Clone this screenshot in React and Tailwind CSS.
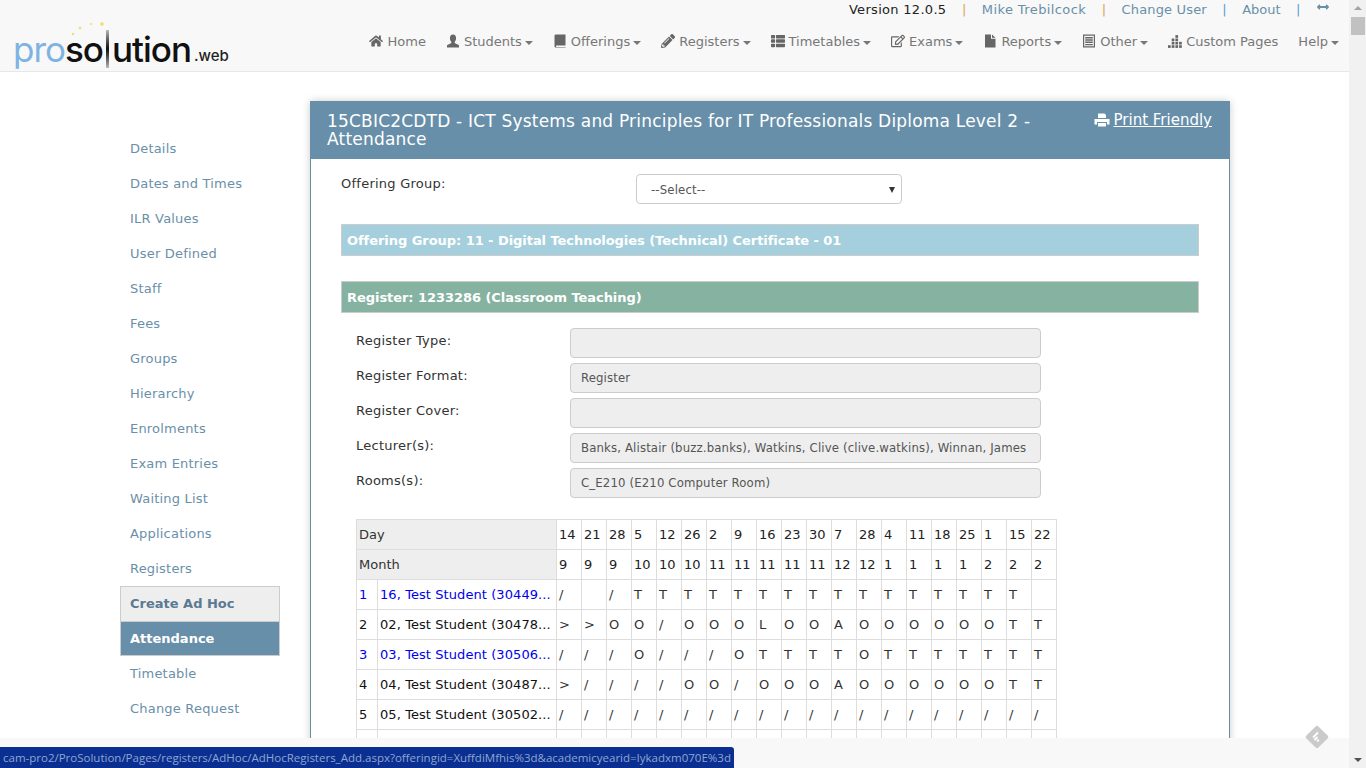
import React from 'react';
import { FaHome, FaPencilAlt, FaThList, FaRegEdit, FaArrowsAltH } from 'react-icons/fa';

function UserIcon({ className }) {
  return (
    <svg viewBox="0 0 14 14" className={className} fill="currentColor">
      <path d="M7 .5c2 0 3.100 1.500 3.100 3.600 0 1.500-.6 3-1.400 3.800v1.200l4.300 2.200v2.200H1v-2.200l4.300-2.200V7.900C4.500 7.100 3.900 5.600 3.900 4.100 3.900 2 5 .5 7 .5z" />
    </svg>
  );
}

function BookIcon({ className }) {
  return (
    <svg viewBox="0 0 14 14" className={className} fill="currentColor">
      <path d="M3 .5h9.500v11H3.700c-.5 0-.8.300-.8.700s.3.700.8.700h8.800v.6H3c-1 0-1.500-.5-1.500-1.500V2C1.500 1 2 .5 3 .5z" />
    </svg>
  );
}

function FileIcon({ className }) {
  return (
    <svg viewBox="0 0 14 14" className={className} fill="currentColor">
      <path d="M2 .5h6v4.200h4.500v8.800H2zM9 .5l3.500 3.300H9z" />
    </svg>
  );
}

function ListAltIcon({ className }) {
  return (
    <svg viewBox="0 0 14 14" className={className} fill="currentColor">
      <path fillRule="evenodd" d="M1 .5h12v13H1zM2.200 1.700v10.600h9.600V1.700z" />
      <path d="M3.200 3h7.600v1.400H3.200zM3.200 5.300h7.600v1.400H3.200zM3.200 7.600h7.600V9H3.200zM3.200 9.900h7.600v1.400H3.200z" />
    </svg>
  );
}

function DotsIcon({ className }) {
  // stepped block of squares used by "Custom Pages"
  const cells = [[0, 10], [3.3, 4], [3.3, 7], [3.3, 10], [6.6, 1], [6.6, 4], [6.6, 7], [6.6, 10], [9.9, 7], [9.9, 10]];
  return (
    <svg viewBox="0 0 12.5 12.5" className={className} fill="currentColor">
      {cells.map(([x, y]) => <rect key={`${x}-${y}`} x={x} y={y} width="2.4" height="2.4" />)}
    </svg>
  );
}

function PrintIcon({ className }) {
  return (
    <svg viewBox="0 0 16 16" className={className} fill="currentColor">
      <path d="M4 1.500h6.500L12 3v3H4zM.5 7h15v5.500H13V10H3v2.500H.5zM4 11h8v3.500H4z" />
    </svg>
  );
}

const NAV = [
  { label: 'Home', icon: FaHome },
  { label: 'Students', icon: UserIcon, caret: true },
  { label: 'Offerings', icon: BookIcon, caret: true },
  { label: 'Registers', icon: FaPencilAlt, caret: true },
  { label: 'Timetables', icon: FaThList, caret: true },
  { label: 'Exams', icon: FaRegEdit, caret: true },
  { label: 'Reports', icon: FileIcon, caret: true },
  { label: 'Other', icon: ListAltIcon, caret: true },
  { label: 'Custom Pages', icon: DotsIcon },
  { label: 'Help', caret: true },
];

const SIDE = ['Details', 'Dates and Times', 'ILR Values', 'User Defined', 'Staff', 'Fees', 'Groups', 'Hierarchy', 'Enrolments', 'Exam Entries', 'Waiting List', 'Applications', 'Registers'];

const FIELDS = [
  ['Register Type:', ''],
  ['Register Format:', 'Register'],
  ['Register Cover:', ''],
  ['Lecturer(s):', 'Banks, Alistair (buzz.banks), Watkins, Clive (clive.watkins), Winnan, James'],
  ['Rooms(s):', 'C_E210 (E210 Computer Room)'],
];

const DAYS = [14, 21, 28, 5, 12, 26, 2, 9, 16, 23, 30, 7, 28, 4, 11, 18, 25, 1, 15, 22];
const MONTHS = [9, 9, 9, 10, 10, 10, 11, 11, 11, 11, 11, 12, 12, 1, 1, 1, 1, 2, 2, 2];

const ROWS = [
  { n: 1, name: '16, Test Student (30449...', link: true, marks: ['/', '', '/', 'T', 'T', 'T', 'T', 'T', 'T', 'T', 'T', 'T', 'T', 'T', 'T', 'T', 'T', 'T', 'T', ''] },
  { n: 2, name: '02, Test Student (30478...', marks: ['>', '>', 'O', 'O', '/', 'O', 'O', 'O', 'L', 'O', 'O', 'A', 'O', 'O', 'O', 'O', 'O', 'O', 'T', 'T'] },
  { n: 3, name: '03, Test Student (30506...', link: true, marks: ['/', '/', '/', 'O', '/', '/', '/', 'O', 'T', 'T', 'T', 'T', 'O', 'T', 'T', 'T', 'T', 'T', 'T', 'T'] },
  { n: 4, name: '04, Test Student (30487...', marks: ['>', '/', '/', '/', '/', 'O', 'O', '/', 'O', 'O', 'O', 'A', 'O', 'O', 'O', 'O', 'O', 'O', 'T', 'T'] },
  { n: 5, name: '05, Test Student (30502...', marks: Array(20).fill('/') },
  { n: '', name: '', marks: Array(20).fill('') },
];

function Sep({ color }) {
  return <span className={`mx-[15.5px] ${color}`}>|</span>;
}

export default function App() {
  return (
    <div className="relative flex h-screen w-full overflow-hidden bg-white text-[13px] text-[#333] font-['DejaVu_Sans',Verdana,sans-serif]">
      <div className="min-w-0 flex-1 overflow-hidden">
        {/* navbar */}
        <div className="h-[72px] border-b border-[#e7e7e7] bg-[#f8f8f8]">
          <div className="flex h-[19px] items-center justify-end pr-[19px] leading-[19px]">
            <span className="tracking-[0.3px] text-[#222]">Version 12.0.5</span>
            <Sep color="text-[#d8a45a]" />
            <span className="tracking-[0.4px] text-[#6a8fa9]">Mike Trebilcock</span>
            <Sep color="text-[#d8a45a]" />
            <span className="tracking-[0.15px] text-[#6a8fa9]">Change User</span>
            <Sep color="text-[#5b9bd5]" />
            <span className="text-[#6a8fa9]">About</span>
            <Sep color="text-[#5b9bd5]" />
            <FaArrowsAltH className="mb-[5px] h-[12px] w-[14px] text-[#6a8fa9]" />
          </div>
          <div className="flex h-[52px] items-start">
            <div className="relative ml-[13px] flex h-[50px] items-end text-[35px] leading-[40px] font-['Inter',sans-serif]">
              <svg viewBox="0 0 50 16" className="absolute left-[54px] top-[2px] h-[16px] w-[50px]" fill="#f2dc6a">
                <circle cx="6" cy="13" r="1.2" />
                <circle cx="13" cy="7" r="1.3" />
                <circle cx="24" cy="3" r="1" />
                <circle cx="35" cy="3" r="1.8" />
              </svg>
              <span className="font-normal tracking-[-1px] text-[#7fb3e2]">pro</span>
              <span className="font-medium tracking-[-1px] text-[#111]">so</span>
              <span className="mx-[3px] mb-[1px] h-[38px] w-[3px] self-end bg-gradient-to-b from-[#bbb] via-[#111] to-[#bbb]" />
              <span className="font-medium tracking-[-1px] text-[#111]">ution</span>
              <span className="mb-[3px] ml-[3px] text-[15px] leading-[20px] font-medium text-[#222]">.web</span>
            </div>
            <div className="ml-auto flex h-[46px] items-center text-[#777]">
              {NAV.map((item) => (
                <div key={item.label} className="flex items-center px-[10px]">
                  {item.icon && <item.icon className="mr-[4px] mb-[3px] h-[14px] w-[14px] text-[#666]" />}
                  <span>{item.label}</span>
                  {item.caret && <span className="ml-[3px] mt-[1px] h-0 w-0 border-x-[4px] border-t-[4px] border-x-transparent border-t-[#777]" />}
                </div>
              ))}
            </div>
          </div>
        </div>

        <div className="flex items-start pl-[120px] pt-[29px]">
          {/* side menu */}
          <div className="w-[160px] shrink-0 pt-[30px] text-[#6a8fa9]">
            {SIDE.map((s) => (
              <div key={s} className="flex h-[35px] items-center px-[10px] tracking-[0.2px]">{s}</div>
            ))}
            <div className="flex h-[36px] items-center border border-[#ccc] bg-[#eee] px-[9px] font-bold text-[#5a7a92]">Create Ad Hoc</div>
            <div className="flex h-[34px] items-center border border-t-0 border-[#ccc] bg-[#688fa9] px-[9px] font-bold text-white">Attendance</div>
            <div className="flex h-[35px] items-center px-[10px] tracking-[0.2px]">Timetable</div>
            <div className="flex h-[35px] items-center px-[10px] tracking-[0.2px]">Change Request</div>
          </div>

          {/* panel */}
          <div className="ml-[30px] w-[920px] shrink-0 border-x border-[#688fa9] shadow-[0_0_8px_rgba(0,0,0,0.2)]">
            <div className="-mx-px flex h-[58px] items-start justify-between bg-[#688fa9] pl-[17px] pr-[18px] text-white">
              <div className="w-[740px] pt-[11px] text-[17px] leading-[18px] tracking-[0.2px]">15CBIC2CDTD - ICT Systems and Principles for IT Professionals Diploma Level 2 - Attendance</div>
              <div className="flex items-center pt-[10px] text-[15px] leading-[18px]">
                <PrintIcon className="mr-[4px] h-[16px] w-[16px]" />
                <span className="underline">Print Friendly</span>
              </div>
            </div>

            <div className="pl-[30px] pr-[30px]">
              <div className="flex h-[65px] pt-[15px]">
                <div className="w-[295px] pt-[1px] leading-[18px] tracking-[0.25px]">Offering Group:</div>
                <div className="relative h-[30px] w-[266px]">
                  <select className="h-full w-full appearance-none rounded border border-[#ccc] bg-white px-[14px] pt-[2px] text-[13px] tracking-[0.15px] text-[#555] font-['DejaVu_Sans_Condensed','Noto_Sans',sans-serif]">
                    <option>--Select--</option>
                  </select>
                  <span className="absolute right-[7px] top-[13px] h-0 w-0 border-x-[3.5px] border-t-[6px] border-x-transparent border-t-[#333]" />
                </div>
              </div>

              <div className="flex h-[32px] items-center border border-[#ccc] bg-[#a5cfdc] px-[5px] pt-[1px] font-bold tracking-[-0.05px] text-white">Offering Group: 11 - Digital Technologies (Technical) Certificate - 01</div>
              <div className="mt-[25px] flex h-[32px] items-center border border-[#ccc] bg-[#86b3a1] px-[5px] pt-[1px] font-bold tracking-[-0.05px] text-white">Register: 1233286 (Classroom Teaching)</div>

              <div className="mt-[15px] flex flex-col gap-[5px] pl-[15px]">
                {FIELDS.map(([label, value]) => (
                  <div key={label} className="flex h-[30px]">
                    <div className="w-[214px] pt-[4px] leading-[18px] tracking-[0.25px]">{label}</div>
                    <input readOnly value={value} className="h-[30px] w-[471px] rounded border border-[#ccc] bg-[#eee] px-[10px] pb-[2px] text-[13px] tracking-[0.15px] text-[#555] font-['DejaVu_Sans_Condensed','Noto_Sans',sans-serif]" />
                  </div>
                ))}
              </div>

              <table className="ml-[15px] mt-[21px] border-collapse leading-[18px]">
                <tbody>
                  <tr className="h-[30px]">
                    <td colSpan={2} className="w-[200px] border border-[#ddd] bg-[#eee] px-[2px]">Day</td>
                    {DAYS.map((d, i) => <td key={i} className="w-[25px] min-w-[25px] border border-[#ddd] px-[2px] text-[#222]">{d}</td>)}
                  </tr>
                  <tr className="h-[30px]">
                    <td colSpan={2} className="border border-[#ddd] bg-[#eee] px-[2px]">Month</td>
                    {MONTHS.map((m, i) => <td key={i} className="border border-[#ddd] px-[2px] text-[#222]">{m}</td>)}
                  </tr>
                  {ROWS.map((r, ri) => (
                    <tr key={ri} className="h-[30px]">
                      <td className={`w-[21px] border border-[#ddd] px-[2px] ${r.link ? 'text-[#0000ee]' : 'text-[#111]'}`}>{r.n}</td>
                      <td className={`w-[179px] border border-[#ddd] px-[2px] whitespace-nowrap tracking-[0.08px] ${r.link ? 'text-[#0000ee]' : 'text-[#111]'}`}>{r.name}</td>
                      {r.marks.map((m, i) => <td key={i} className="border border-[#ddd] px-[2px] text-[#333]">{m}</td>)}
                    </tr>
                  ))}
                </tbody>
              </table>
            </div>
          </div>
        </div>
      </div>

      {/* browser scrollbar */}
      <div className="flex h-full w-[17px] shrink-0 flex-col items-center bg-[#f1f1f1]">
        <span className="mt-[6px] h-0 w-0 border-x-[4px] border-b-[4px] border-x-transparent border-b-[#a3a3a3]" />
        <div className="mt-[7px] h-[18px] w-[14px] bg-[#c1c1c1]" />
        <span className="mb-[6px] mt-auto h-0 w-0 border-x-[4px] border-t-[4px] border-x-transparent border-t-[#505050]" />
      </div>

      {/* fixed footer strip + feedback badge + link status bubble */}
      <div className="absolute bottom-0 left-0 right-[17px] h-[30px] bg-[#f8f8f8]" />
      <svg viewBox="0 0 24 24" className="absolute right-[37px] top-[725px] h-[24px] w-[24px]">
        <rect x="3.5" y="3.5" width="17" height="17" rx="2" fill="#cacaca" transform="rotate(45 12 12)" />
        <path d="M8 12.5l5-5M9.500 15l3-3" stroke="#fff" strokeWidth="1.8" fill="none" />
        <circle cx="13" cy="15.5" r="1.2" fill="#fff" />
      </svg>
      <div className="absolute bottom-0 left-0 flex h-[21px] w-[734px] items-center overflow-hidden whitespace-nowrap rounded-tr-[3px] bg-[#0a2f91] pl-[3px] text-[11.5px] text-[#8fa6cf] font-['Open_Sans',sans-serif]">
        cam-pro2/ProSolution/Pages/registers/AdHoc/AdHocRegisters_Add.aspx?offeringid=XuffdiMfhis%3d&amp;academicyearid=Iykadxm070E%3d
      </div>
    </div>
  );
}
